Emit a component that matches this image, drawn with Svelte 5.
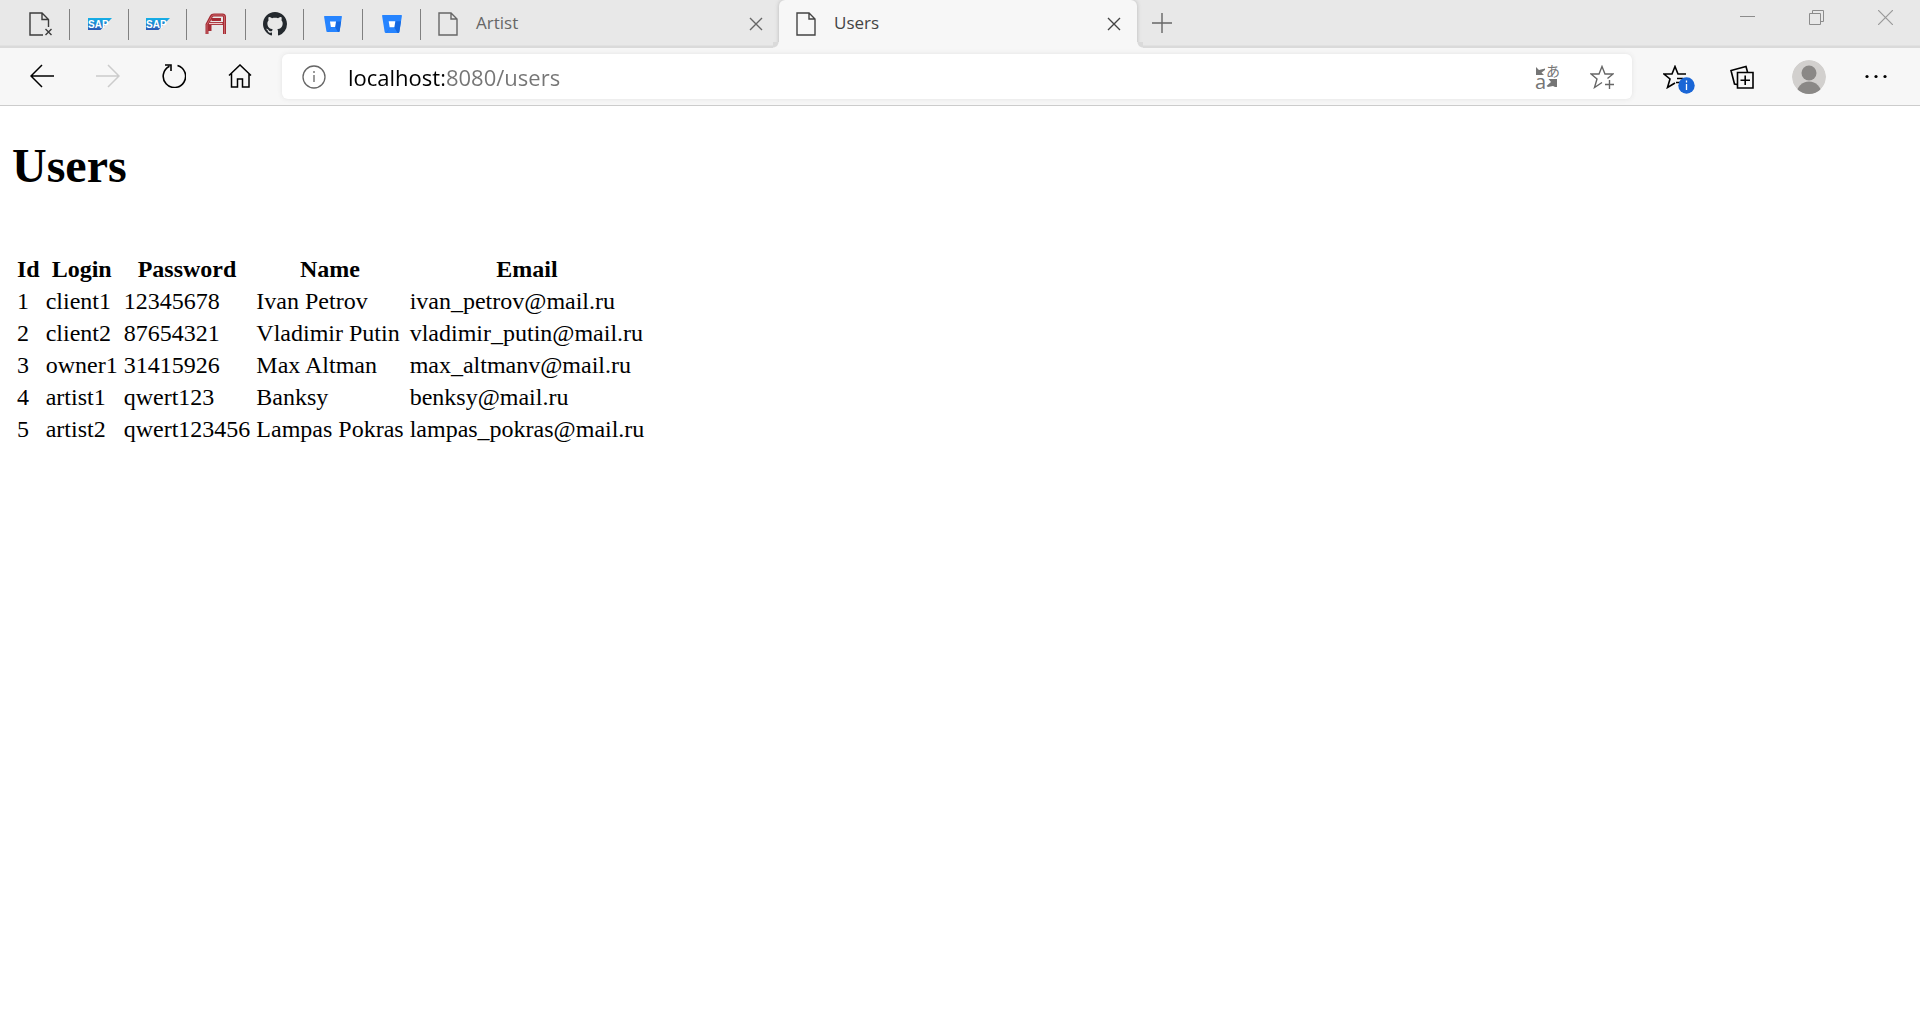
<script>
  const pinned = [
    { kind: 'missing', label: 'Unavailable page' },
    { kind: 'sap', label: 'SAP' },
    { kind: 'sap', label: 'SAP' },
    { kind: 'chair', label: 'Chair' },
    { kind: 'github', label: 'GitHub' },
    { kind: 'bucket', size: 18, label: 'Bitbucket' },
    { kind: 'bucket', size: 20, label: 'Bitbucket' }
  ];

  const tabs = [
    { title: 'Artist', active: false },
    { title: 'Users', active: true }
  ];

  const columns = ['Id', 'Login', 'Password', 'Name', 'Email'];

  const users = [
    [1, 'client1', '12345678', 'Ivan Petrov', 'ivan_petrov@mail.ru'],
    [2, 'client2', '87654321', 'Vladimir Putin', 'vladimir_putin@mail.ru'],
    [3, 'owner1', '31415926', 'Max Altman', 'max_altmanv@mail.ru'],
    [4, 'artist1', 'qwert123', 'Banksy', 'benksy@mail.ru'],
    [5, 'artist2', 'qwert123456', 'Lampas Pokras', 'lampas_pokras@mail.ru']
  ];

  let url = $state('localhost:8080/users');
</script>

<header class="browser">
  <div class="strip">
    <div class="pinned">
      {#each pinned as tab}
        <button class="pin" aria-label={tab.label}>
          {#if tab.kind === 'missing'}
            <svg width="24" height="24" viewBox="0 0 24 24" fill="none" stroke="#3b3b3b" stroke-width="1.4">
              <path d="M14 23H1V1H13L19.500 7.500V15M13 1V7.500H19.500M16.500 17L22.500 23M22.500 17L16.500 23" />
            </svg>
          {:else if tab.kind === 'sap'}
            <svg width="24" height="12" viewBox="0 0 24 12">
              <defs>
                <linearGradient id="sapBlue" x1="0" y1="0" x2="0" y2="1">
                  <stop offset="0" stop-color="#14b1e8" />
                  <stop offset="1" stop-color="#2c58b5" />
                </linearGradient>
              </defs>
              <path d="M0 0H24L12.500 12H0Z" fill="url(#sapBlue)" />
              <text x="0" y="10" class="sap-word">SAP</text>
            </svg>
          {:else if tab.kind === 'chair'}
            <svg width="22" height="22" viewBox="0 0 22 22" fill="none" stroke-linejoin="round">
              <path d="M2 21V11.500L6.500 3Q7 2 9 2H17.500Q19.500 2 19.500 4V21M2 10.500H19.500M6.500 6.500H16M5 12V18" stroke="#a52c34" stroke-width="3" />
              <path d="M2 21V11.500L6.500 3.500Q7 2 9 2H17.500Q19.500 2 19.500 4V21" stroke="#c9656a" stroke-width="1" />
              <path d="M4 10.500H17.500" stroke="#f0c9ca" stroke-width="1.200" />
            </svg>
          {:else if tab.kind === 'github'}
            <svg width="24" height="24" viewBox="0 0 16 16" fill="#24292e">
              <path d="M8 0C3.580 0 0 3.580 0 8c0 3.540 2.290 6.530 5.470 7.590.4.070.55-.17.55-.38 0-.19-.01-.82-.01-1.490-2.010.37-2.530-.49-2.690-.94-.09-.23-.48-.94-.82-1.130-.28-.15-.68-.52-.01-.53.63-.01 1.080.58 1.230.82.72 1.210 1.870.87 2.330.66.07-.52.28-.87.51-1.070-1.780-.2-3.640-.89-3.640-3.950 0-.87.31-1.590.82-2.150-.08-.2-.36-1.020.08-2.120 0 0 .67-.21 2.200.82.64-.18 1.320-.27 2-.27s1.360.09 2 .27c1.530-1.040 2.200-.82 2.200-.82.44 1.100.16 1.920.08 2.120.51.56.82 1.270.82 2.150 0 3.070-1.870 3.750-3.650 3.950.29.25.54.73.54 1.480 0 1.070-.01 1.930-.01 2.200 0 .21.15.46.55.38A8.010 8.010 0 0 0 16 8c0-4.420-3.580-8-8-8z" />
            </svg>
          {:else}
            <svg width={tab.size} height={tab.size} viewBox="0 0 18 18">
              <path d="M0.600 1H17.400Q18 1 17.900 1.700L15.600 16.300Q15.500 17 14.800 17H3.200Q2.500 17 2.400 16.300L0.100 1.700Q0 1 0.600 1Z" fill="#2684ff" />
              <path d="M12 6.500H17.100L15.600 16.300Q15.500 17 14.800 17H4L7.500 12H11Z" fill="#1468e0" />
              <path d="M4 17L7.500 12H11L14 17Z" fill="#2684ff" />
              <path d="M6 6.500H12L11.100 12H6.900Z" fill="#fff" />
            </svg>
          {/if}
        </button>
      {/each}
    </div>

    {#each tabs as tab}
      <div class="tab" class:active={tab.active}>
        <button class="tab-main">
          <svg width="20" height="24" viewBox="0 0 20 24" fill="none" stroke="currentColor" stroke-width="1.400">
            <path d="M1 1H13L19 7V23H1ZM13 1V7H19" />
          </svg>
          <span>{tab.title}</span>
        </button>
        <button class="close" aria-label="Close {tab.title}">
          <svg width="14" height="14" viewBox="0 0 14 14" stroke="currentColor" stroke-width="1.400">
            <path d="M1 1L13 13M13 1L1 13" />
          </svg>
        </button>
      </div>
    {/each}

    <button class="add" aria-label="New tab">
      <svg width="20" height="20" viewBox="0 0 20 20" stroke="#666" stroke-width="1.400">
        <path d="M10 0V20M0 10H20" />
      </svg>
    </button>

    <div class="window">
      <button aria-label="Minimize">
        <svg width="15" height="15" viewBox="0 0 15 15" stroke="#8c8c8c"><path d="M0 6.500H15" /></svg>
      </button>
      <button aria-label="Restore">
        <svg width="15" height="15" viewBox="0 0 15 15" fill="none" stroke="#8c8c8c">
          <path d="M0.500 3.500H11.500V14.500H0.500ZM3.500 3V0.500H14.500V11.500H12" />
        </svg>
      </button>
      <button aria-label="Close window">
        <svg width="15" height="15" viewBox="0 0 15 15" stroke="#999" stroke-width="1.200"><path d="M0 0L15 15M15 0L0 15" /></svg>
      </button>
    </div>
  </div>

  <nav class="toolbar" aria-label="Browser">
    <div class="group left">
      <button aria-label="Back">
        <svg width="24" height="24" viewBox="0 0 24 24" fill="none" stroke="#000" stroke-width="1.500"><path d="M24 12H1M12 1L1 12L12 23" /></svg>
      </button>
      <button aria-label="Forward" disabled>
        <svg width="24" height="24" viewBox="0 0 24 24" fill="none" stroke="#ccc" stroke-width="1.500"><path d="M0 12H23M12 1L23 12L12 23" /></svg>
      </button>
      <button aria-label="Refresh">
        <svg width="24" height="24" viewBox="0 0 24 24" fill="none" stroke="#000" stroke-width="1.600">
          <path d="M15.500 1.500A11.200 11.200 0 1 1 7.500 2.200M3 1H9V7" />
        </svg>
      </button>
      <button aria-label="Home">
        <svg width="24" height="24" viewBox="0 0 24 24" fill="none" stroke="#000" stroke-width="1.500">
          <path d="M1 11.500L12 1L23 11.500M3.500 9.500V23H9.500V15H14.500V23H21V9.500" />
        </svg>
      </button>
    </div>

    <div class="address">
      <button class="info" aria-label="Site information">
        <svg width="24" height="24" viewBox="0 0 24 24" fill="none" stroke="#666" stroke-width="1.300">
          <circle cx="12" cy="12" r="11" /><path d="M12 10V17M12 6V8" />
        </svg>
      </button>
      <input type="text" aria-label="Address" bind:value={url} spellcheck="false" />
      <button aria-label="Translate">
        <svg width="26" height="44" viewBox="0 -9 26 44" fill="#757575">
          <text x="0" y="25" class="latin">a</text>
          <text x="11" y="12" class="kana">あ</text>
          <path d="M1 3V11H9L6.500 8.500L10 6V4.500L4 6ZM22 15V23H20L18 22L13 23L11.500 22L16 18L13.500 15Z" />
        </svg>
      </button>
      <button aria-label="Add to favorites">
        <svg width="24" height="24" viewBox="0 0 24 24" fill="none" stroke="#666" stroke-width="1.400">
          <path d="M12 17.500L4.500 22.500L7 14L1 9H9L12 1.500L15 9H23L17.500 13.500M19.500 15V24M15 19.500H24" />
        </svg>
      </button>
    </div>

    <div class="group right">
      <button aria-label="Favorites">
        <span class="badged">
          <svg width="24" height="24" viewBox="0 0 24 24" fill="none" stroke="#000" stroke-width="1.600">
            <path d="M12 18L4.500 22.500L7 14L1 9H9L12 1.500L15 9H23M14 13.500H20M13 17.500H17" />
          </svg>
          <svg class="badge" width="17" height="17" viewBox="0 0 17 17">
            <circle cx="8.500" cy="8.500" r="8.200" fill="#1a66d6" />
            <path d="M8.500 7V13M8.500 3.500V5.500" stroke="#fff" stroke-width="1.300" />
          </svg>
        </span>
      </button>
      <button aria-label="Collections">
        <svg width="24" height="24" viewBox="0 0 24 24" fill="none" stroke="#000" stroke-width="1.600">
          <path d="M7.500 7.500H23V23H7.500ZM15.200 10.500V20M10.500 15.200H20M7 19.500L4.500 19L1 5.500L16 1.500L17.500 7" />
        </svg>
      </button>
      <button aria-label="Profile">
        <svg width="34" height="34" viewBox="0 0 34 34">
          <defs><clipPath id="face"><circle cx="17" cy="17" r="17" /></clipPath></defs>
          <g clip-path="url(#face)">
            <circle cx="17" cy="17" r="17" fill="#d2d0ce" />
            <circle cx="17" cy="13" r="7.500" fill="#8a8886" />
            <circle cx="17" cy="34" r="12.500" fill="#8a8886" />
          </g>
        </svg>
      </button>
      <button aria-label="Settings and more">
        <svg width="24" height="24" viewBox="0 0 24 24">
          <circle cx="3" cy="11.500" r="1.600" /><circle cx="12" cy="11.500" r="1.600" /><circle cx="21" cy="11.500" r="1.600" />
        </svg>
      </button>
    </div>
  </nav>
</header>

<main>
  <h1>Users</h1>
  <table>
    <thead>
      <tr>
        {#each columns as column}<th scope="col">{column}</th>{/each}
      </tr>
    </thead>
    <tbody>
      {#each users as user}
        <tr>
          {#each user as value}<td>{value}</td>{/each}
        </tr>
      {/each}
    </tbody>
  </table>
</main>

<style>
  :global(body) {
    margin: 0;
    background: #fff;
  }

  .browser {
    font-family: 'Open Sans', 'Noto Sans', sans-serif;
    background: #f7f7f7;
    border-bottom: 1px solid #ccc;
  }

  button {
    display: flex;
    align-items: center;
    justify-content: center;
    padding: 0;
    border: 0;
    background: none;
    font: inherit;
    color: inherit;
  }

  svg {
    display: block;
    flex: none;
  }

  .strip {
    display: flex;
    height: 48px;
    padding-left: 12px;
    background: linear-gradient(#e8e8e8 45px, #dadada 46px, #dadada);
  }

  .pinned {
    display: grid;
    grid-template-columns: repeat(7, 1fr);
    width: 409px;
    flex: none;
  }

  .pin {
    position: relative;
  }

  .pin::after {
    content: '';
    position: absolute;
    top: 9px;
    right: 0;
    width: 1px;
    height: 31px;
    background: #808080;
  }

  .sap-word {
    font: bold 10px 'Liberation Sans', sans-serif;
    fill: #fff;
  }

  .tab {
    position: relative;
    display: flex;
    flex: 0 1 358px;
    color: #666;
    font-size: 17px;
    line-height: 22px;
  }

  .tab.active {
    background: #f7f7f7;
    border-radius: 6px 6px 0 0;
    box-shadow: 0 0 4px #b8b8b8;
    clip-path: inset(0 -6px 0 -6px);
    color: #444;
  }

  .tab.active::before,
  .tab.active::after {
    content: '';
    position: absolute;
    bottom: 0;
    width: 6px;
    height: 6px;
  }

  .tab.active::before {
    right: 100%;
    background: radial-gradient(circle at 0 0, #dadada 5px, #f7f7f7 6px);
  }

  .tab.active::after {
    left: 100%;
    background: radial-gradient(circle at 100% 0, #dadada 5px, #f7f7f7 6px);
  }

  .tab-main {
    flex: 1;
    justify-content: flex-start;
    gap: 18px;
    padding-left: 17px;
  }

  .tab-main span {
    padding-bottom: 2px;
  }

  .close {
    width: 46px;
  }

  .add {
    width: 50px;
    padding-bottom: 2px;
  }

  .window {
    display: flex;
    margin-left: auto;
  }

  .window button {
    width: 69px;
    align-items: flex-start;
    padding-top: 10px;
  }

  .toolbar {
    display: flex;
    align-items: center;
    gap: 9px;
    height: 57px;
    padding: 0 11px 0 9px;
  }

  .group {
    display: flex;
  }

  .group button {
    width: 66px;
    height: 44px;
  }

  .left button {
    padding-bottom: 2px;
  }

  .right button {
    width: 67px;
  }

  .address {
    display: flex;
    align-items: center;
    flex: 1;
    height: 45px;
    background: #fff;
    border-radius: 6px;
    box-shadow: 0 0 5px #e2e2e2;
  }

  .address button {
    width: 54px;
    height: 44px;
  }

  .address .info {
    width: 64px;
  }

  .address button:last-child {
    margin-right: 3px;
  }

  /* The host is black and the rest of the address grey */
  input {
    flex: 1;
    min-width: 0;
    height: 44px;
    padding: 0 0 0 2px;
    border: 0;
    outline: 0;
    font: 22px 'Open Sans', 'Noto Sans', sans-serif;
    color: #000;
    background: linear-gradient(90deg, #000 98px, #757575 98px);
    background-clip: text;
    -webkit-background-clip: text;
    -webkit-text-fill-color: transparent;
  }

  .latin {
    font: 20px 'Open Sans', sans-serif;
  }

  .kana {
    font: 14px 'Noto Sans CJK JP', sans-serif;
  }

  .badged {
    position: relative;
  }

  .badge {
    position: absolute;
    right: -8px;
    bottom: -5px;
  }

  main {
    padding: 0 12px;
    font: 24px/29px 'Liberation Serif', 'Times New Roman', serif;
    color: #000;
    overflow: auto;
  }

  h1 {
    margin: 32px 0 59px;
    font-size: 48px;
    line-height: 55px;
  }

  table {
    border-collapse: separate;
    border-spacing: 4px 3px;
  }

  th,
  td {
    padding: 0 1px;
    white-space: nowrap;
  }
</style>
